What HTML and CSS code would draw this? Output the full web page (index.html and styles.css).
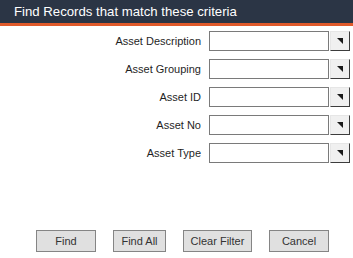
FILE: index.html
```html
<!DOCTYPE html>
<html>
<head>
<meta charset="utf-8">
<link rel="stylesheet" href="styles.css">
</head>
<body>
<div class="dialog">
  <div class="title">Find Records that match these criteria</div>
  <div class="form">
    <div class="row"><label class="lbl">Asset Description</label><div class="field"></div><div class="drop"><svg width="7" height="7" viewBox="0 0 7 7"><path d="M0 0H6V6Z" fill="#1a1a1a"/></svg></div></div>
    <div class="row"><label class="lbl">Asset Grouping</label><div class="field"></div><div class="drop"><svg width="7" height="7" viewBox="0 0 7 7"><path d="M0 0H6V6Z" fill="#1a1a1a"/></svg></div></div>
    <div class="row"><label class="lbl">Asset ID</label><div class="field"></div><div class="drop"><svg width="7" height="7" viewBox="0 0 7 7"><path d="M0 0H6V6Z" fill="#1a1a1a"/></svg></div></div>
    <div class="row"><label class="lbl">Asset No</label><div class="field"></div><div class="drop"><svg width="7" height="7" viewBox="0 0 7 7"><path d="M0 0H6V6Z" fill="#1a1a1a"/></svg></div></div>
    <div class="row"><label class="lbl">Asset Type</label><div class="field"></div><div class="drop"><svg width="7" height="7" viewBox="0 0 7 7"><path d="M0 0H6V6Z" fill="#1a1a1a"/></svg></div></div>
  </div>
  <div class="buttons">
    <button class="btn w60">Find</button>
    <button class="btn w53">Find All</button>
    <button class="btn w69">Clear Filter</button>
    <button class="btn w60">Cancel</button>
  </div>
</div>
</body>
</html>
```
FILE: styles.css
```css
html, body {
  margin: 0;
  padding: 0;
  background: #ffffff;
}
.dialog {
  width: 353px;
  height: 258px;
  display: flex;
  flex-direction: column;
  font-family: "Liberation Sans", Arial, sans-serif;
}
.title {
  height: 23px;
  background: #2b3545;
  border-bottom: 3px solid #e05a2b;
  color: #ffffff;
  font-size: 13.2px;
  line-height: 23px;
  padding-left: 14px;
  box-sizing: content-box;
}
.form {
  display: flex;
  flex-direction: column;
  gap: 8px;
  padding-top: 5px;
}
.row {
  display: flex;
  align-items: center;
  height: 20px;
}
.lbl {
  width: 201px;
  text-align: right;
  font-size: 11px;
  color: #1f1f1f;
  margin-right: 8px;
}
.field {
  width: 118px;
  height: 18px;
  border: 1px solid #7a7a7a;
  background: #fff;
}
.drop {
  margin-left: 1px;
  width: 18px;
  height: 18px;
  background: #f0f0f0;
  border: 1px solid;
  border-color: #e6e6e6 #3c3c3c #3c3c3c #e6e6e6;
  display: flex;
  align-items: center;
  justify-content: center;
}
.drop svg {
  display: block;
  margin-left: 1px;
  margin-top: 1px;
}
.buttons {
  margin-top: auto;
  margin-bottom: 6px;
  display: flex;
  gap: 17px;
  padding-left: 36px;
}
.btn {
  height: 22px;
  background: #e0e0e0;
  border: 1px solid #858585;
  font-family: "Liberation Sans", Arial, sans-serif;
  font-size: 11px;
  color: #333;
  padding: 0;
  border-radius: 0;
}
.w60 { width: 60px; }
.w53 { width: 53px; }
.w69 { width: 69px; }
```
